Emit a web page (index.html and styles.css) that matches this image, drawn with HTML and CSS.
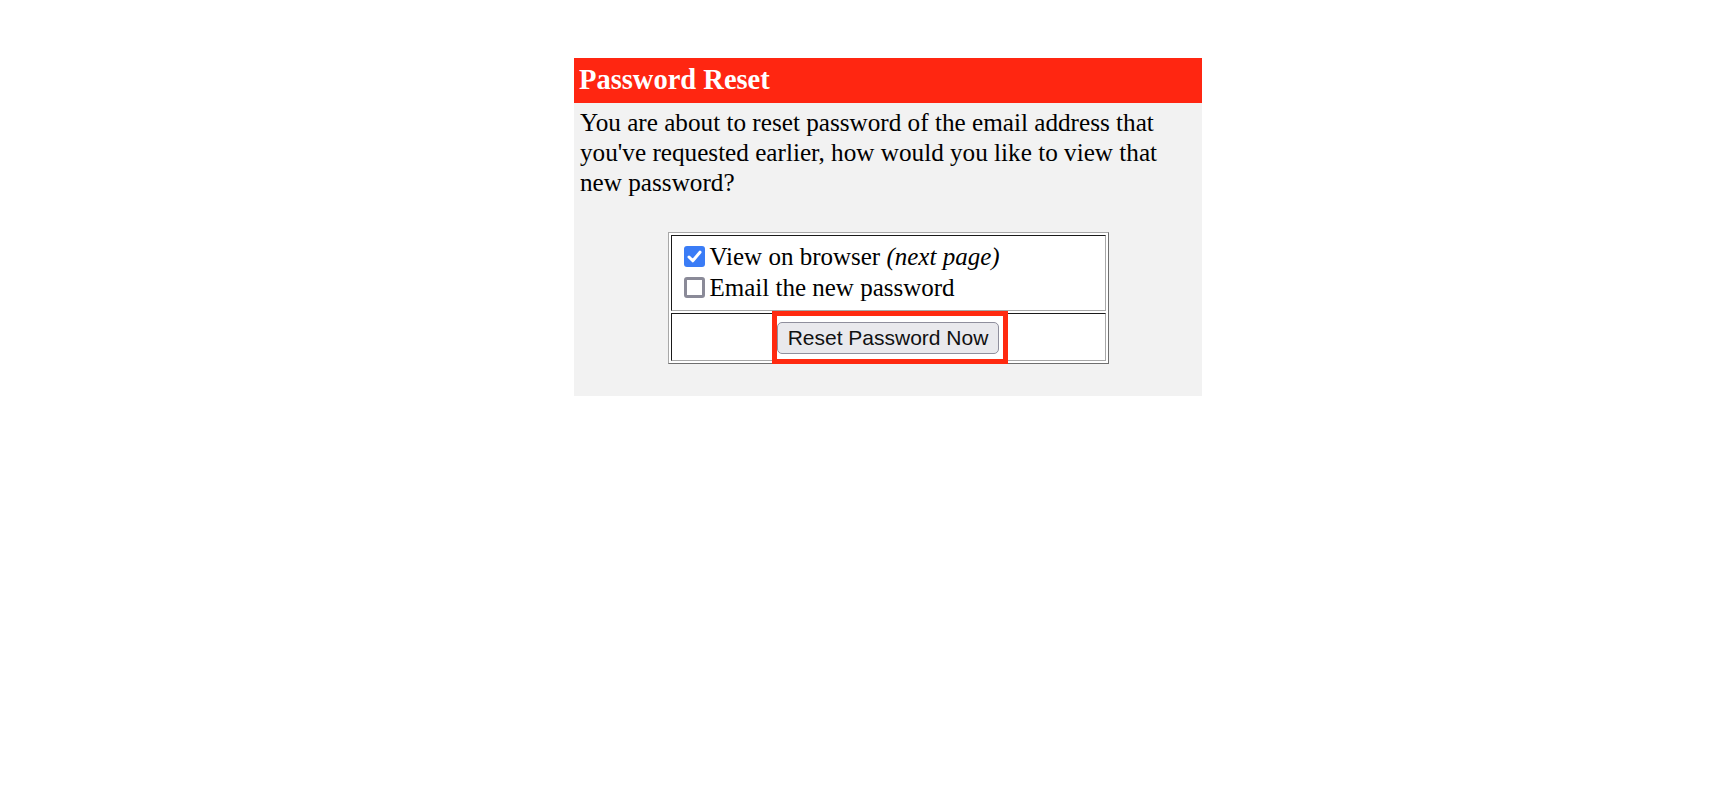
FILE: index.html
```html
<!DOCTYPE html>
<html>
<head>
<meta charset="utf-8">
<title>Password Reset</title>
<link rel="stylesheet" href="styles.css">
</head>
<body>
<div class="panel">
  <div class="panel-title">Password Reset</div>
  <p class="intro">You are about to reset password of the email address that you've requested earlier, how would you like to view that new password?</p>
  <table class="options">
    <tr>
      <td class="opt-cell">
        <label class="opt">
          <span class="box checked"><svg viewBox="0 0 21 21" width="21" height="21"><path d="M5 11 L8.8 14.8 L16 6.2" fill="none" stroke="#fff" stroke-width="3" stroke-linecap="round" stroke-linejoin="round"/></svg></span>
          <span class="opt-text">View on browser <em>(next page)</em></span>
        </label>
        <label class="opt">
          <span class="box"></span>
          <span class="opt-text">Email the new password</span>
        </label>
      </td>
    </tr>
    <tr>
      <td class="btn-cell">
        <span class="btn-wrap">
          <button class="btn" type="button">Reset Password Now</button>
          <span class="highlight"></span>
        </span>
      </td>
    </tr>
  </table>
</div>
</body>
</html>
```

FILE: styles.css
```css
html, body {
  margin: 0;
  padding: 0;
  background: #ffffff;
}

body {
  font-family: "Liberation Serif", "Times New Roman", serif;
  color: #000;
}

.panel {
  width: 628px;
  margin: 58px 0 0 574px;
  background: #f2f2f2;
  padding-bottom: 32px;
}

.panel-title {
  background: #ff2611;
  color: #fff;
  font-weight: bold;
  font-size: 28.5px;
  height: 45px;
  line-height: 43px;
  padding: 0 5px;
  box-sizing: border-box;
}

.intro {
  margin: 5px 0 0 0;
  padding: 0 6px;
  font-size: 25.2px;
  line-height: 30px;
}

.options {
  margin: 34px auto 0;
  width: 441px;
  border-collapse: separate;
  border-spacing: 2px;
  border: 1px solid;
  border-color: #a8a8a8 #6f6f6f #6f6f6f #a8a8a8;
  background: #fff;
}

.options td {
  border: 1px solid;
  border-color: #1a1a1a #a8a8a8 #a8a8a8 #1a1a1a;
  background: #fff;
}

.opt-cell {
  padding: 5px 12px 7px;
}

.opt {
  display: flex;
  align-items: center;
  height: 31px;
  font-size: 25px;
  line-height: 29.4px;
}

.box {
  width: 21px;
  height: 21px;
  box-sizing: border-box;
  border: 3px solid #8a8a98;
  border-radius: 3px;
  background: #fff;
  margin-right: 5px;
  flex: none;
  display: flex;
  align-items: center;
  justify-content: center;
}

.box.checked {
  background: #3a7cf6;
  border: none;
  border-radius: 3px;
}

.box svg {
  display: block;
}

.btn-cell {
  text-align: center;
  height: 46px;
  padding: 0;
}

.btn-wrap {
  position: relative;
  display: inline-block;
  vertical-align: middle;
  top: 1px;
}

.btn {
  display: block;
  width: 222px;
  height: 32px;
  box-sizing: border-box;
  padding: 0 8px;
  font-family: "Liberation Sans", Arial, sans-serif;
  font-size: 21px;
  color: #111;
  background: #e9e9ed;
  border: 1px solid #8f8f9d;
  border-radius: 5px;
}

.highlight {
  position: absolute;
  top: -11px;
  left: -5px;
  right: -9px;
  bottom: -10px;
  border: 5px solid #ff2a10;
  pointer-events: none;
}
```
